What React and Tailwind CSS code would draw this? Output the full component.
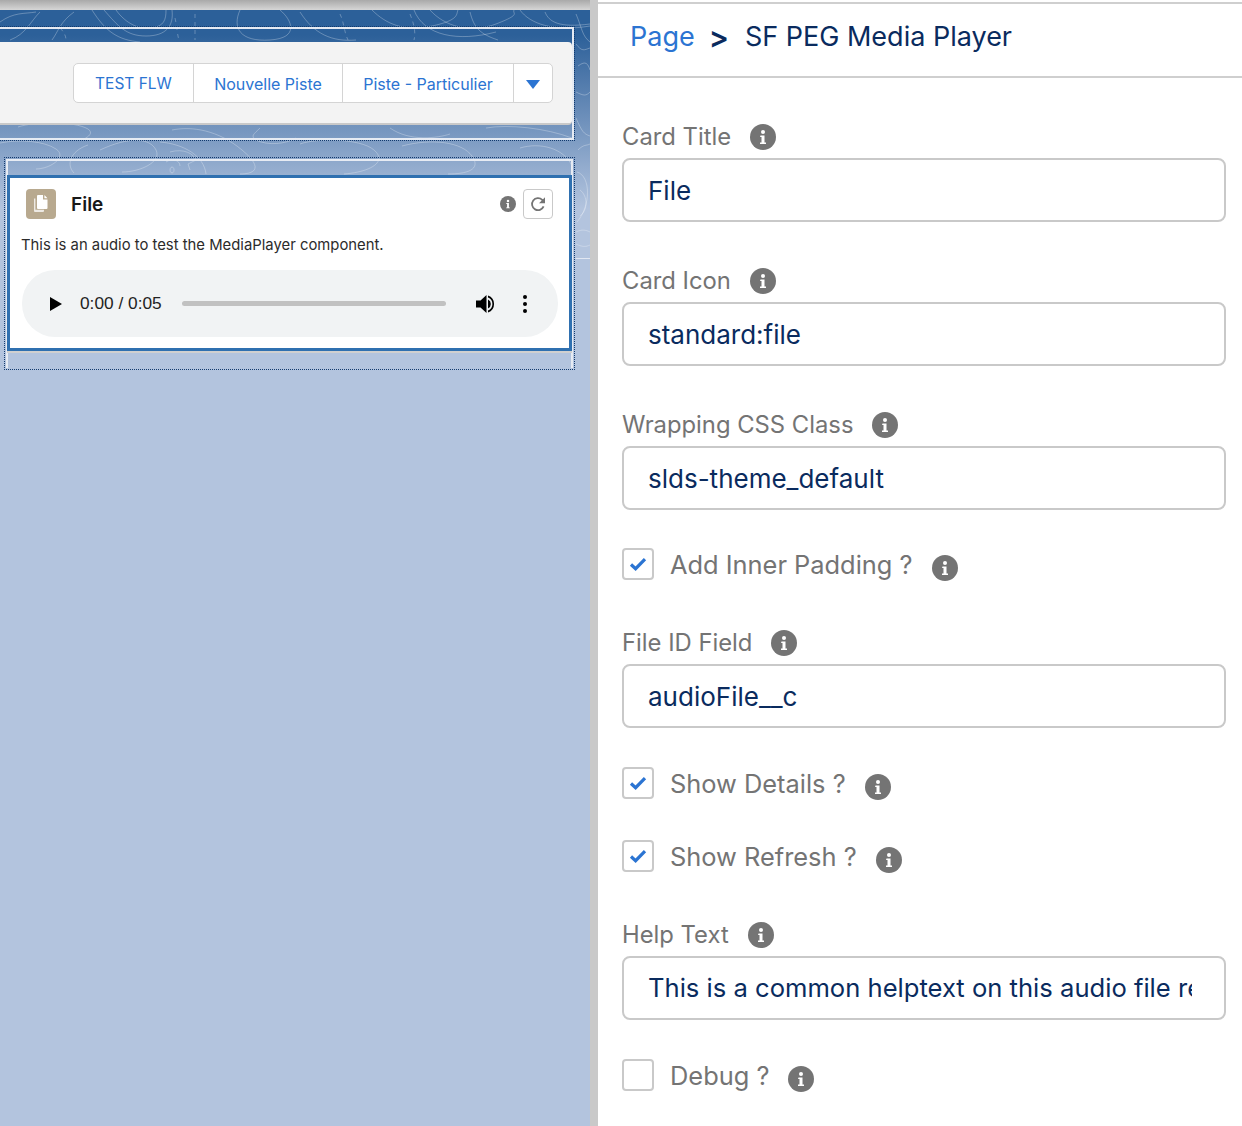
function InfoIcon({ size = 26 }) {
  return (
    <svg width={size} height={size} viewBox="0 0 26 26" className="shrink-0">
      <circle cx="13" cy="13" r="13" fill="#747474" />
      <circle cx="13" cy="8" r="2" fill="#fff" />
      <path d="M10.5 11.5h4v7h1.5v1.6h-6v-1.6h1.5v-5.4h-1.5z" fill="#fff" />
    </svg>
  );
}

function Check({ checked }) {
  return (
    <span className="flex h-8 w-8 shrink-0 items-center justify-center rounded-[4px] border-2 border-[#c9c9c9] bg-white">
      {checked && (
        <svg width="18" height="14" viewBox="0 0 18 14">
          <path d="M2 7.5l4.6 4.2L16 2.2" fill="none" stroke="#2b74d2" strokeWidth="3.2" />
        </svg>
      )}
    </span>
  );
}

function TextField({ label, value, mt, clip }) {
  return (
    <div className={mt}>
      <div className="flex h-[30px] items-center gap-[19px] text-[23.8px] leading-[30px] text-[#747474]">
        <span>{label}</span>
        <InfoIcon />
      </div>
      <div className={`mt-[6px] flex h-16 items-center rounded-lg border-2 border-[#c9c9c9] bg-white pl-[24px] pr-[32px] text-[#0a2b5e] ${clip ? "text-[25.6px]" : "text-[26px]"}`}>
        <span className={`whitespace-nowrap ${clip ? "block w-full overflow-hidden" : ""}`}>{value}</span>
      </div>
    </div>
  );
}

function CheckField({ label, checked, mt }) {
  return (
    <div className={`flex h-8 items-center ${mt}`}>
      <Check checked={checked} />
      <span className="ml-4 mt-[2px] text-[25.4px] leading-8 text-[#747474]">{label}</span>
      <span className="ml-[19px] mt-[7px]">
        <InfoIcon />
      </span>
    </div>
  );
}

function Contours() {
  return (
    <svg className="absolute left-0 top-0" width="590" height="260" viewBox="0 0 590 260" fill="none" stroke="#fff" strokeOpacity="0.28" strokeWidth="1">
      {/* top band */}
      <path d="M0 22c14-10 24-8 36-10M10 40c16-6 20-18 30-28M52 40c6-8 8-18 22-28M92 10c14 22 26 30 48 32M104 10c14 16 22 26 42 26s28-10 26-26M116 10c10 14 24 20 36 18s14-8 14-18" />
      <path d="M240 10c-8 18 0 32 30 30s22-20 10-30M300 12c14 22 32 30 56 28M372 10c14 14 32 22 60 16s24-12 26-16M414 10c10 26 44 32 82 22M430 10c14 16 40 24 66 14s16-10 18-14M470 12c4 16 10 22 28 28M520 10c10 14 34 22 70 16M545 12c4 10 14 16 45 12" />
      <path d="M60 28c4 4 6 8 6 12M175 18c2 8 2 16 4 22M195 14v26M340 14c4 8 4 18 8 26M410 14c4 10 6 18 4 26" strokeDasharray="4 4" />
      {/* band under the toolbar */}
      <path d="M18 127c18-6 56-6 70 2 6 4 0 8-4 10M0 143c20-4 44-2 56 6s-6 20-20 20M88 145c-18 6-22 20-14 28M100 150c30-14 50-12 56 0s-16 22-34 22M160 142c24 2 44 14 46 32M172 130c20-4 46 0 70 20s10 24-2 24" />
      <path d="M260 128c-6 6-10 8-4 12 12 6 30 4 40-2M300 144c16-6 60-6 74 6s-4 22-30 24M390 128c20 14 48 10 60 6M402 146c30-8 60-4 70 10s-6 18-24 18M486 128c22-4 60 0 86 10M520 148c20-6 44 0 52 18" />
      <path d="M170 152c14-4 24 2 26 8l-8 4 2 6M166 162c6-4 14-2 14 4M172 167a2 3 0 1 0 .1 0" />
      {/* right strip */}
      <path d="M576 14c6 14 6 22 14 28M576 44c6 8 8 6 14 4M578 66c8-6 10-2 12 4M576 92c8 4 10 4 14 0M576 118c6 14 8 16 14 18M578 150c6-6 8-4 12-6M577 172c14 4 14 34 0 50M580 190c8 6 8 20 0 26M576 232c6-3 10-2 14 0M576 244c6 3 10 3 14 1" />
      <path d="M575.5 258.5H590" strokeOpacity="0.6" />
    </svg>
  );
}

function LeftPanel() {
  return (
    <div className="relative h-full w-[590px] shrink-0 overflow-hidden bg-[#b3c4de]">
      <div className="absolute inset-x-0 top-[10px] h-[248px] bg-gradient-to-b from-[#2c6099] from-[10%] to-[#b3c4de] to-[80%]" />
      <Contours />
      <div className="absolute inset-x-0 top-0 h-[10px] bg-gradient-to-b from-[#a9a9a9] to-[#d6d6d6]" />

      <div className="relative pt-[26px]">
        {/* header region */}
        <div className="-ml-2 h-[115px] w-[583px] border border-dotted border-[#123a6e]">
          <div className="h-full border-2 border-[#e6ebf3] pt-[13px]">
            <div className="flex h-[83px] items-center justify-end rounded-r border-b-2 border-[#c9c9c9] bg-[#f3f3f3] pr-[19px]">
              <div className="mt-px flex h-10 overflow-hidden rounded-[5px] border-[1.5px] border-[#d4d4d4] bg-white text-[16px] text-[#2b74d2]">
                <span className="flex w-[120px] items-center justify-center border-r-[1.5px] border-[#d4d4d4] pt-[2px] text-[15.5px]">TEST FLW</span>
                <span className="flex w-[149px] items-center justify-center border-r-[1.5px] border-[#d4d4d4] pt-[2px]">Nouvelle Piste</span>
                <span className="flex w-[171px] items-center justify-center border-r-[1.5px] border-[#d4d4d4] pt-[2px]">Piste - Particulier</span>
                <span className="flex w-[38px] items-center justify-center pt-[3px]">
                  <svg width="14" height="9" viewBox="0 0 14 9">
                    <path d="M0 0h14L7 9z" fill="#2b74d2" />
                  </svg>
                </span>
              </div>
            </div>
          </div>
        </div>

        {/* audio card region */}
        <div className="ml-1 mt-4 h-[213px] w-[571px] border border-dotted border-[#123a6e] p-px">
          <div className="h-full border-2 border-b-0 border-[#e6ebf3] pt-[14px]">
            <div className="-mx-px h-[176px] border-[3px] border-[#2f70b0] bg-white pl-[11px] pr-[16px] pt-[10px]">
              <div className="flex h-8 items-center pl-[5px]">
                <span className="flex h-[30px] w-[30px] items-center justify-center rounded-[4px] bg-[#b8a98f]">
                  <svg width="20" height="22" viewBox="0 0 20 22">
                    <path d="M3 5.5h1.4v11.2H13V18a1 1 0 0 1-1 1H4a1 1 0 0 1-1-1z" fill="#fff" fillOpacity="0.75" />
                    <path d="M7 2h5v4.5h4.5V15a1 1 0 0 1-1 1H7a1 1 0 0 1-1-1V3a1 1 0 0 1 1-1zM13.4 2l3.1 3.2h-3.1z" fill="#fff" />
                  </svg>
                </span>
                <span className="ml-[15px] mt-[2px] text-[19px] font-semibold text-[#181818]">File</span>
                <span className="ml-auto">
                  <InfoIcon size={16} />
                </span>
                <span className="ml-[7px] flex h-[30px] w-[30px] items-center justify-center rounded-[4px] border border-[#c9c9c9]">
                  <svg width="18" height="18" viewBox="0 0 18 18" fill="none">
                    <path d="M14.6 11.4A6 6 0 1 1 13.2 4.8L14.8 6.4" stroke="#747474" strokeWidth="1.8" />
                    <path d="M16 2.2v6h-6z" fill="#747474" />
                  </svg>
                </span>
              </div>
              <p className="mt-[13px] h-[24px] text-[14.85px] leading-[24px] text-[#2b2b2b]">
                This is an audio to test the MediaPlayer component.
              </p>
              <div className="mt-[13px] ml-px flex h-[67px] w-[536px] items-center rounded-[33px] bg-[#f1f3f4] pl-[27px] text-[#000]">
                <svg className="ml-[1px]" width="12" height="14" viewBox="0 0 12 14">
                  <path d="M0 0l12 7-12 7z" fill="#000" />
                </svg>
                <span className="ml-[18px] mt-[1px] w-[82px] whitespace-nowrap font-['Liberation_Sans',sans-serif] text-[17.3px] text-[#222]">0:00 / 0:05</span>
                <span className="ml-[20px] h-[5px] w-[264px] rounded-full bg-[#c1c1c1]" />
                <svg className="ml-[30px]" width="21" height="20" viewBox="0 0 21 20">
                  <path d="M0 6.5h4.5L10.5 1v18l-6-5.5H0z" fill="#000" />
                  <path d="M12 5.5a5 5 0 0 1 0 9zM12 1.5a9 9 0 0 1 0 17v-2a7 7 0 0 0 0-13z" fill="#000" />
                </svg>
                <span className="ml-[26px] flex flex-col gap-[3px]">
                  <i className="h-1 w-1 rounded-full bg-black" />
                  <i className="h-1 w-1 rounded-full bg-black" />
                  <i className="h-1 w-1 rounded-full bg-black" />
                </span>
              </div>
            </div>
            <div className="-mx-px h-[2px] bg-[#d0d0d0]" />
          </div>
        </div>
      </div>
    </div>
  );
}

function RightPanel() {
  return (
    <div className="h-full min-w-0 flex-1 bg-white">
      <div className="mt-[2px] flex h-[76px] items-center border-y-2 border-[#cfcfcf] pb-[6px] pl-[32px] text-[27px]">
        <span className="text-[#2b74d2]">Page</span>
        <span className="ml-[14px] text-[30px] leading-none font-semibold text-[#0a2b5e]">&gt;</span>
        <span className="ml-[16px] text-[#0a2b5e]">SF PEG Media Player</span>
      </div>
      <div className="pl-6 pr-4 pt-[44px]">
        <TextField label="Card Title" value="File" />
        <TextField label="Card Icon" value="standard:file" mt="mt-[44px]" />
        <TextField label="Wrapping CSS Class" value="slds-theme_default" mt="mt-[44px]" />
        <CheckField label="Add Inner Padding ?" checked mt="mt-[38px]" />
        <TextField label="File ID Field" value="audioFile__c" mt="mt-[48px]" />
        <CheckField label="Show Details ?" checked mt="mt-[39px]" />
        <CheckField label="Show Refresh ?" checked mt="mt-[41px]" />
        <TextField label="Help Text" value="This is a common helptext on this audio file recording" mt="mt-[48px]" clip />
        <CheckField label="Debug ?" mt="mt-[39px]" />
      </div>
    </div>
  );
}

export default function App() {
  return (
    <div className="flex h-[1126px] w-[1242px] overflow-hidden bg-white font-['Inter','Liberation_Sans',sans-serif]">
      <LeftPanel />
      <div className="h-full w-2 shrink-0 bg-[#c9c9c9]" />
      <RightPanel />
    </div>
  );
}
